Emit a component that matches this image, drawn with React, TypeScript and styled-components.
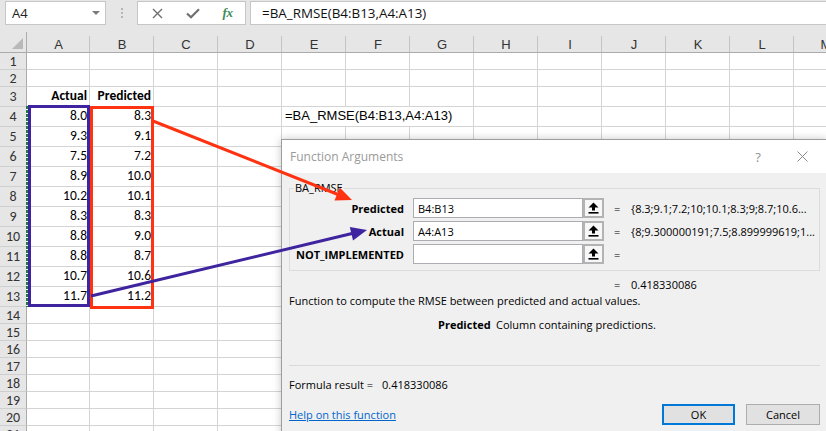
import React from "react";
import styled, { createGlobalStyle } from "styled-components";

const GlobalStyle = createGlobalStyle`
  html, body { margin: 0; padding: 0; background: #fff; }
  body { width: 826px; height: 431px; overflow: hidden; }
  *, *::before, *::after { box-sizing: border-box; }
`;

const CELL_FONT = `"Carlito", "Lato", "Liberation Sans", sans-serif`;
const UI_FONT = `"Open Sans", "Noto Sans", "Liberation Sans", sans-serif`;
const ARIAL = `"Liberation Sans", Arial, sans-serif`;

const Screen = styled.div`
  position: relative;
  width: 826px;
  height: 431px;
  overflow: hidden;
  background: #fff;
`;

/* ---------- formula bar ---------- */
const TopBar = styled.div`
  display: flex;
  align-items: flex-start;
  height: 32px;
  padding-top: 1px;
  background: #e6e6e6;
`;

const NameBox = styled.div`
  margin-left: 5px;
  width: 101px;
  height: 24px;
  background: #fff;
  border: 1px solid #c6c6c6;
  display: flex;
  align-items: center;
  justify-content: space-between;
  padding: 0 5px 0 6px;
  font: 13px ${UI_FONT};
  color: #222;
`;

const Caret = styled.span`
  width: 0;
  height: 0;
  border-left: 4px solid transparent;
  border-right: 4px solid transparent;
  border-top: 4px solid #7a7a7a;
`;

const Grip = styled.div`
  width: 31px;
  height: 24px;
  display: flex;
  flex-direction: column;
  align-items: center;
  justify-content: center;
  gap: 2px;
`;

const GripDot = styled.span`
  width: 2px;
  height: 2px;
  background: #b5b5b5;
`;

const FxBox = styled.div`
  width: 109px;
  height: 24px;
  background: #fff;
  border: 1px solid #c6c6c6;
  display: grid;
  grid-template-columns: repeat(3, 35px);
  padding-left: 2px;
  align-items: center;
  justify-items: center;
`;

const FxGlyph = styled.span`
  font: italic bold 13px "Liberation Serif", serif;
  color: #3d8a55;
  letter-spacing: -0.5px;
`;

const FormulaInput = styled.div`
  flex: 1;
  margin-left: 4px;
  margin-right: -2px;
  height: 24px;
  background: #fff;
  border: 1px solid #c6c6c6;
  display: flex;
  align-items: center;
  padding-left: 11px;
  font: 13.4px ${UI_FONT};
  color: #111;
  white-space: nowrap;
`;

/* ---------- sheet ---------- */
const Sheet = styled.div`
  display: grid;
  grid-template-columns: 27px 63px repeat(12, 64px);
  grid-template-rows: 21px 17px 17px 20px repeat(10, 20px) repeat(8, 17px);
  width: max-content;
`;

const Corner = styled.div`
  position: relative;
  background: #e6e6e6;
  border-right: 1px solid #ababab;
  border-bottom: 1px solid #ababab;
  &::after {
    content: "";
    position: absolute;
    right: 3px;
    bottom: 3px;
    width: 0;
    height: 0;
    border-left: 11px solid transparent;
    border-bottom: 11px solid #b9b9b9;
  }
`;

const ColHeader = styled.div`
  position: relative;
  background: #e6e6e6;
  border-bottom: 1px solid #ababab;
  display: flex;
  align-items: center;
  justify-content: center;
  padding-top: 4px;
  font: 13px ${ARIAL};
  color: #333;
  &::after {
    content: "";
    position: absolute;
    right: 0;
    top: 4px;
    bottom: 0;
    width: 1px;
    background: #c4c4c4;
  }
`;

const RowHeader = styled.div`
  background: #e6e6e6;
  border-right: 1px solid #ababab;
  border-bottom: 1px solid #cfcfcf;
  display: flex;
  align-items: center;
  justify-content: center;
  font: 14px ${CELL_FONT};
  color: #333;
`;

const Cell = styled.div<{ $bold?: boolean; $left?: boolean; $span?: number }>`
  grid-column: span ${(p) => p.$span ?? 1};
  border-right: 1px solid #d4d4d4;
  border-bottom: 1px solid #d4d4d4;
  display: flex;
  align-items: flex-end;
  justify-content: ${(p) => (p.$left ? "flex-start" : "flex-end")};
  padding: 0 2px 2px ${(p) => (p.$left ? "3px" : "2px")};
  font: ${(p) => (p.$bold ? "bold" : "normal")} 13.5px/16px ${CELL_FONT};
  color: #000;
  white-space: nowrap;
  overflow: visible;
`;

const FormulaCell = styled(Cell)`
  font: 13px/16px ${ARIAL};
`;

/* ---------- overlays on the sheet ---------- */
const Marquee = styled.div`
  position: absolute;
  left: 26px;
  top: 106px;
  width: 2px;
  height: 201px;
  background: repeating-linear-gradient(
    to bottom,
    #1f7a45 0px,
    #1f7a45 3px,
    #ffffff 3px,
    #ffffff 4px
  );
`;

const RangeBox = styled.div`
  position: absolute;
  border: 3px solid;
  pointer-events: none;
`;

const ActualRange = styled(RangeBox)`
  left: 28px;
  top: 105px;
  width: 62px;
  height: 202px;
  border-color: #3f24a0;
`;

const PredictedRange = styled(RangeBox)`
  left: 90px;
  top: 106px;
  width: 64px;
  height: 203px;
  border-color: #ff3311;
`;

const ArrowLayer = styled.svg`
  position: absolute;
  left: 0;
  top: 0;
  width: 826px;
  height: 431px;
  pointer-events: none;
  z-index: 5;
`;

/* ---------- dialog ---------- */
const Dialog = styled.div`
  position: absolute;
  left: 281px;
  top: 139px;
  width: 547px;
  height: 300px;
  border: 1px solid #9d9d9d;
  background: #f0f0f0;
  box-shadow: 0 0 8px rgba(0, 0, 0, 0.22);
  z-index: 2;
  display: flex;
  flex-direction: column;
  font: 11px ${UI_FONT};
  color: #000;
`;

const TitleBar = styled.div`
  height: 33px;
  flex: none;
  background: #fff;
  display: flex;
  align-items: center;
  padding: 0 15px 0 8px;
`;

const TitleText = styled.span`
  flex: 1;
  font: 12px ${UI_FONT};
  color: #9a9a9a;
`;

const HelpGlyph = styled.span`
  width: 16px;
  text-align: center;
  font: 13px ${UI_FONT};
  color: #8f8f8f;
  margin-right: 26px;
`;

const CloseGlyph = styled.span`
  width: 20px;
  display: flex;
  justify-content: center;
`;

const DialogBody = styled.div`
  flex: 1;
  display: flex;
  flex-direction: column;
  padding: 15px 7px 0 7px;
`;

const GroupBox = styled.div`
  position: relative;
  border: 1px solid #dcdcdc;
  padding: 9px 0 6px 0;
`;

const GroupLegend = styled.span`
  position: absolute;
  left: 4px;
  top: -9px;
  padding: 0 1px;
  background: #f0f0f0;
  font: 11px ${UI_FONT};
  line-height: 16px;
`;

const ArgGrid = styled.div`
  display: grid;
  grid-template-columns: 123px 191px 27px 1fr;
  grid-auto-rows: 20px;
  row-gap: 3px;
  align-items: center;
`;

const ArgLabel = styled.span`
  text-align: right;
  padding-right: 9px;
  font-weight: 700;
  white-space: nowrap;
`;

const ArgField = styled.div`
  display: flex;
  height: 20px;
`;

const ArgInput = styled.div`
  flex: 1;
  background: #fff;
  border: 1px solid #abadb3;
  display: flex;
  align-items: center;
  padding-left: 4px;
`;

const RefButton = styled.div`
  width: 21px;
  background: #f7f7f7;
  border: 2px solid #b3b3b3;
  display: flex;
  align-items: center;
  justify-content: center;
`;

const Eq = styled.span`
  padding-left: 10px;
`;

const ArgValue = styled.span`
  white-space: nowrap;
  overflow: hidden;
`;

const ResultRow = styled.div`
  display: flex;
  height: 16px;
  align-items: center;
  margin-top: 5px;
  padding-left: 325px;
`;

const ResultEq = styled.span`
  width: 17px;
`;

const Description = styled.div`
  margin-top: 1px;
  height: 16px;
  line-height: 16px;
`;

const ParamHelp = styled.div`
  display: flex;
  margin-top: 8px;
  height: 16px;
  line-height: 16px;
  padding-left: 149px;
`;

const ParamName = styled.span`
  width: 58px;
  font-weight: 700;
`;

const Separator = styled.div`
  margin-top: 32px;
  border-top: 1px solid #dadada;
`;

const FormulaResult = styled.div`
  display: flex;
  margin-top: 11px;
  height: 16px;
  line-height: 16px;
`;

const ResultLabel = styled.span`
  width: 93px;
`;

const Footer = styled.div`
  display: flex;
  align-items: center;
  margin-top: 11px;
  height: 21px;
`;

const HelpLink = styled.a`
  flex: 1;
  color: #0066cc;
  text-decoration: underline;
  cursor: pointer;
`;

const DialogButton = styled.button<{ $default?: boolean }>`
  width: ${(p) => (p.$default ? "73px" : "74px")};
  height: 21px;
  margin-left: ${(p) => (p.$default ? "0" : "11px")};
  background: #e1e1e1;
  border: ${(p) => (p.$default ? "2px solid #0078d7" : "1px solid #adadad")};
  font: 11px ${UI_FONT};
  color: #000;
  padding: 0;
`;

/* ---------- data ---------- */
const COLS = ["A", "B", "C", "D", "E", "F", "G", "H", "I", "J", "K", "L", "M"];
const ACTUAL = ["8.0", "9.3", "7.5", "8.9", "10.2", "8.3", "8.8", "8.8", "10.7", "11.7"];
const PREDICTED = ["8.3", "9.1", "7.2", "10.0", "10.1", "8.3", "9.0", "8.7", "10.6", "11.2"];
const ROWS = Array.from({ length: 21 }, (_, i) => i + 1);

function renderRow(r: number) {
  const cells: React.ReactNode[] = [<RowHeader key={`h${r}`}>{r}</RowHeader>];
  for (let c = 0; c < COLS.length; c++) {
    const key = `${COLS[c]}${r}`;
    if (r === 3 && c === 0) {
      cells.push(<Cell key={key} $bold>Actual</Cell>);
    } else if (r === 3 && c === 1) {
      cells.push(<Cell key={key} $bold>Predicted</Cell>);
    } else if (r >= 4 && r <= 13 && c === 0) {
      cells.push(<Cell key={key}>{ACTUAL[r - 4]}</Cell>);
    } else if (r >= 4 && r <= 13 && c === 1) {
      cells.push(<Cell key={key}>{PREDICTED[r - 4]}</Cell>);
    } else if (r === 4 && c === 4) {
      cells.push(
        <FormulaCell key={key} $left $span={3}>
          =BA_RMSE(B4:B13,A4:A13)
        </FormulaCell>
      );
      c += 2;
    } else {
      cells.push(<Cell key={key} />);
    }
  }
  return cells;
}

const RefArrowIcon = () => (
  <svg width="11" height="12" viewBox="0 0 11 12">
    <polygon points="5.5,0.5 10.5,5.5 7,5.5 7,8.5 4,8.5 4,5.5 0.5,5.5" fill="#000" />
    <rect x="0.5" y="10" width="10" height="1.6" fill="#000" />
  </svg>
);

export default function App() {
  return (
    <>
      <GlobalStyle />
      <Screen>
        <TopBar>
          <NameBox>
            <span>A4</span>
            <Caret />
          </NameBox>
          <Grip>
            <GripDot />
            <GripDot />
            <GripDot />
          </Grip>
          <FxBox>
            <svg width="11" height="11" viewBox="0 0 11 11">
              <path d="M1 1 L10 10 M10 1 L1 10" stroke="#6f6f6f" strokeWidth="1.4" />
            </svg>
            <svg width="14" height="11" viewBox="0 0 14 11">
              <path d="M1 5.5 L5 9.3 L13 1.3" stroke="#6f6f6f" strokeWidth="2.2" fill="none" />
            </svg>
            <FxGlyph>fx</FxGlyph>
          </FxBox>
          <FormulaInput>=BA_RMSE(B4:B13,A4:A13)</FormulaInput>
        </TopBar>

        <Sheet>
          <Corner />
          {COLS.map((c) => (
            <ColHeader key={c}>{c}</ColHeader>
          ))}
          {ROWS.map((r) => renderRow(r))}
        </Sheet>

        <Marquee />
        <ActualRange />
        <PredictedRange />

        <Dialog>
          <TitleBar>
            <TitleText>Function Arguments</TitleText>
            <HelpGlyph>?</HelpGlyph>
            <CloseGlyph>
              <svg width="11" height="11" viewBox="0 0 11 11">
                <path d="M0.5 0.5 L10.5 10.5 M10.5 0.5 L0.5 10.5" stroke="#8a8a8a" strokeWidth="1" />
              </svg>
            </CloseGlyph>
          </TitleBar>
          <DialogBody>
            <GroupBox>
              <GroupLegend>BA_RMSE</GroupLegend>
              <ArgGrid>
                <ArgLabel>Predicted</ArgLabel>
                <ArgField>
                  <ArgInput>B4:B13</ArgInput>
                  <RefButton>
                    <RefArrowIcon />
                  </RefButton>
                </ArgField>
                <Eq>=</Eq>
                <ArgValue>{"{8.3;9.1;7.2;10;10.1;8.3;9;8.7;10.6..."}</ArgValue>

                <ArgLabel>Actual</ArgLabel>
                <ArgField>
                  <ArgInput>A4:A13</ArgInput>
                  <RefButton>
                    <RefArrowIcon />
                  </RefButton>
                </ArgField>
                <Eq>=</Eq>
                <ArgValue>{"{8;9.300000191;7.5;8.899999619;1..."}</ArgValue>

                <ArgLabel>NOT_IMPLEMENTED</ArgLabel>
                <ArgField>
                  <ArgInput />
                  <RefButton>
                    <RefArrowIcon />
                  </RefButton>
                </ArgField>
                <Eq>=</Eq>
                <ArgValue />
              </ArgGrid>
            </GroupBox>
            <ResultRow>
              <ResultEq>=</ResultEq>
              <span>0.418330086</span>
            </ResultRow>
            <Description>Function to compute the RMSE between predicted and actual values.</Description>
            <ParamHelp>
              <ParamName>Predicted</ParamName>
              <span>Column containing predictions.</span>
            </ParamHelp>
            <Separator />
            <FormulaResult>
              <ResultLabel>Formula result =</ResultLabel>
              <span>0.418330086</span>
            </FormulaResult>
            <Footer>
              <HelpLink>Help on this function</HelpLink>
              <DialogButton $default>OK</DialogButton>
              <DialogButton>Cancel</DialogButton>
            </Footer>
          </DialogBody>
        </Dialog>

        <ArrowLayer viewBox="0 0 826 431">
          <line x1="153" y1="121" x2="338" y2="194.5" stroke="#ff3311" strokeWidth="3" />
          <polygon points="352,200 334.5,200.6 339.7,187.6" fill="#ff3311" />
          <line x1="91" y1="296" x2="352" y2="233.5" stroke="#3f24a0" strokeWidth="3" />
          <polygon points="367,230 353,240.5 349.8,226.9" fill="#3f24a0" />
        </ArrowLayer>
      </Screen>
    </>
  );
}
